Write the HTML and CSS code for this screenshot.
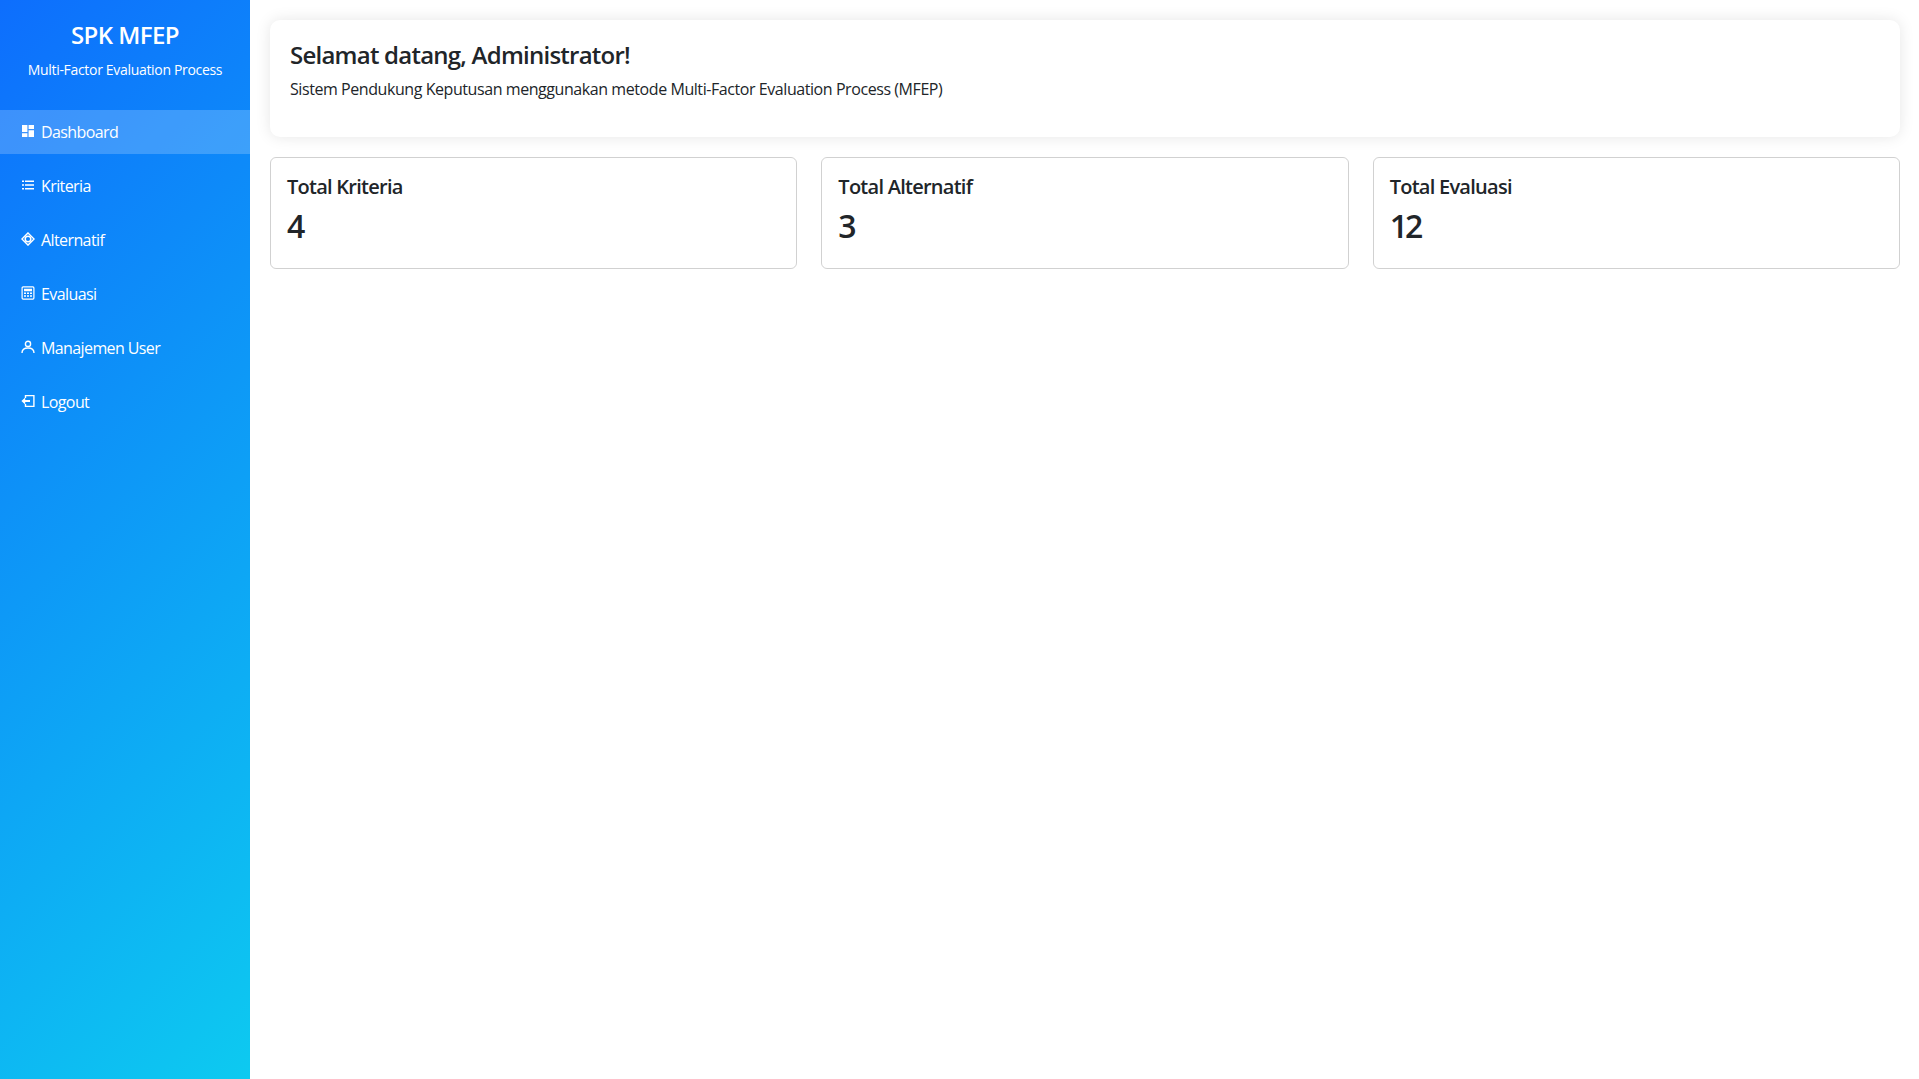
FILE: index.html
```html
<!DOCTYPE html>
<html lang="id">
<head>
<meta charset="utf-8">
<title>SPK MFEP</title>
<link rel="stylesheet" href="styles.css">
</head>
<body>
<div class="layout">
  <aside class="sidebar">
    <div class="brand">
      <h4>SPK MFEP</h4>
      <small>Multi-Factor Evaluation Process</small>
    </div>
    <nav class="menu">
      <a class="item active" href="#"><svg class="icon" viewBox="0 0 14 14"><path fill="currentColor" d="M1 1h5.4v7H1zM7.6 1H13v4H7.6zM1 9.2h5.4V13H1zM7.6 6.2H13V13H7.6z"/></svg>Dashboard</a>
      <a class="item" href="#"><svg class="icon" viewBox="0 0 14 14"><path fill="currentColor" d="M1 2.5h2v1.6H1zM4 2.5h9v1.6H4zM1 6.2h2v1.6H1zM4 6.2h9v1.6H4zM1 9.9h2v1.6H1zM4 9.9h9v1.6H4z"/></svg>Kriteria</a>
      <a class="item" href="#"><svg class="icon" viewBox="0 0 14 14"><path fill="none" stroke="currentColor" stroke-width="1.4" d="M7 .9 13.1 7 7 13.1.9 7z"/><circle cx="7" cy="7" r="2.8" fill="none" stroke="currentColor" stroke-width="1.5"/></svg>Alternatif</a>
      <a class="item" href="#"><svg class="icon" viewBox="0 0 14 14"><rect x="1.1" y=".9" width="11.8" height="12.2" rx="1" fill="none" stroke="currentColor" stroke-width="1.2"/><path fill="currentColor" d="M3 2.8h8v2.4H3zM3 6.6h2v1.5H3zM6 6.6h2v1.5H6zM9 6.6h2v1.5H9zM3 9.2h2v1.6H3zM6 9.2h2v1.6H6zM9 9.2h2v1.6H9z"/></svg>Evaluasi</a>
      <a class="item" href="#"><svg class="icon" viewBox="0 0 14 14"><circle cx="7" cy="3.9" r="2.6" fill="none" stroke="currentColor" stroke-width="1.4"/><path fill="none" stroke="currentColor" stroke-width="1.4" d="M1 13c0-3.2 2.4-5 6-5s6 1.8 6 5"/></svg>Manajemen User</a>
      <a class="item" href="#"><svg class="icon" viewBox="0 0 14 14"><path fill="none" stroke="currentColor" stroke-width="1.4" d="M4.5 4V1.6h8.4v10.8H4.5V10"/><path fill="currentColor" d="M.4 7l3.8-3.4v2.4H9v2H4.2v2.4z"/></svg>Logout</a>
    </nav>
  </aside>
  <main class="main">
    <section class="welcome">
      <h4>Selamat datang, Administrator!</h4>
      <p>Sistem Pendukung Keputusan menggunakan metode Multi-Factor Evaluation Process (MFEP)</p>
    </section>
    <section class="stats">
      <div class="stat"><h5>Total Kriteria</h5><h2>4</h2></div>
      <div class="stat"><h5>Total Alternatif</h5><h2>3</h2></div>
      <div class="stat"><h5>Total Evaluasi</h5><h2>12</h2></div>
    </section>
  </main>
</div>
</body>
</html>
```

FILE: styles.css
```css
* { box-sizing: border-box; }
html, body { height: 100%; }
body {
  margin: 0;
  font-family: "Open Sans", "Noto Sans", sans-serif;
  font-size: 16px;
  line-height: 24px;
  color: #212529;
  background: #fff;
}
.layout { display: flex; height: 100vh; overflow: hidden; }
.sidebar {
  flex: 0 0 250px;
  background: linear-gradient(135deg, #0d6efd, #0dcaf0);
  color: #fff;
}
.brand { height: 110px; padding-top: 20px; text-align: center; }
.brand h4 { margin: 0 0 10px; font-size: 24px; line-height: 29px; font-weight: 600; letter-spacing: -.55px; }
.brand small { display: block; font-size: 14px; line-height: 21px; letter-spacing: -.32px; }
.menu { display: flex; flex-direction: column; gap: 10px; }
.item {
  display: flex;
  align-items: center;
  height: 44px;
  padding: 0 22px;
  color: #fff;
  text-decoration: none;
  letter-spacing: -.6px;
}
.item.active { background: rgba(255,255,255,.2); }
.icon { width: 14px; height: 14px; margin: -3px 6px 0 -1px; flex: none; }
.main { flex: 1; min-width: 0; padding: 20px 19px 20px 20px; }
.welcome {
  height: 117px;
  padding: 20px;
  border-radius: 10px;
  background: #fff;
  box-shadow: 0 0 15px rgba(0,0,0,.1);
  margin-bottom: 20px;
}
.welcome h4 { margin: 0 0 8px; font-size: 24px; line-height: 29px; font-weight: 600; letter-spacing: -.76px; }
.welcome p { margin: 0; letter-spacing: -.43px; }
.stats { display: grid; grid-template-columns: repeat(3, 1fr); gap: 24px; }
.stat { border: 1px solid rgba(0,0,0,.18); border-radius: 6px; padding: 17px 16px 16px; height: 112px; }
.stat h5 { margin: 0 0 8px; font-size: 20px; line-height: 24px; font-weight: 600; letter-spacing: -.74px; }
.stat h2 { margin: 0; font-size: 32px; line-height: 38px; font-weight: 600; letter-spacing: -3px; }
```
